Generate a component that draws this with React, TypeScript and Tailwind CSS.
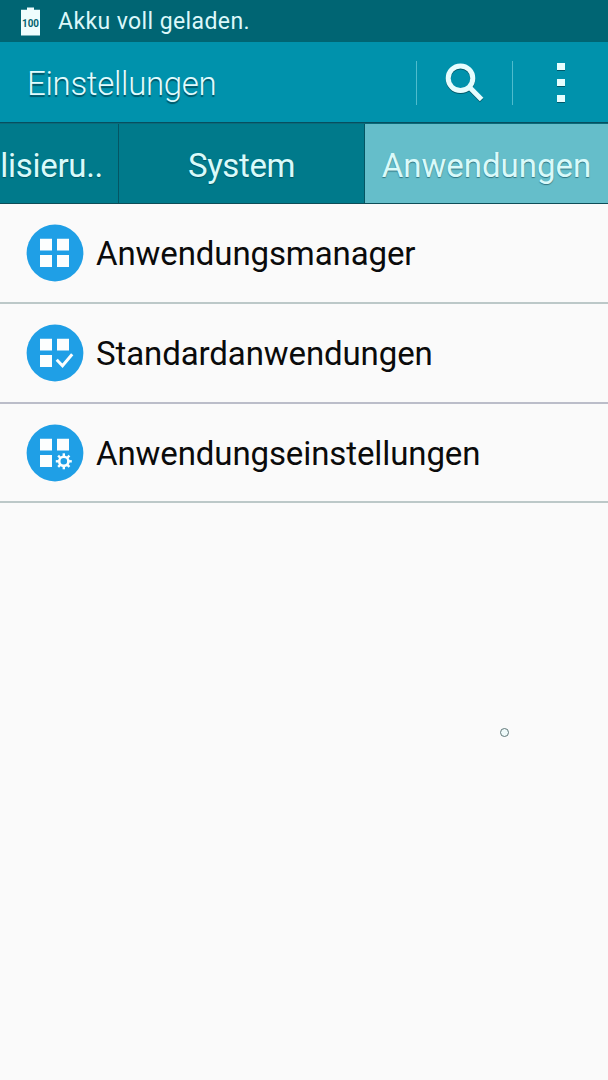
import type { ReactNode } from "react";

function BatteryIcon() {
  return (
    <svg width="19" height="29" viewBox="0 0 19 29" className="block">
      <path d="M6 0.5h7v2.3h6v25.7H0V2.8h6z" fill="#effdfd" />
      <text x="9.5" y="19.6" textAnchor="middle" textLength="17" lengthAdjust="spacingAndGlyphs" fontSize="11" fontWeight="700" fontFamily="Roboto, sans-serif" fill="#04636f">
        100
      </text>
    </svg>
  );
}

function SearchIcon() {
  return (
    <svg width="40" height="42" viewBox="0 0 40 42" className="block drop-shadow-[0_1px_0.5px_rgba(0,50,60,0.6)]">
      <circle cx="15.5" cy="16.2" r="12.3" fill="none" stroke="#e6fdfe" strokeWidth="5" />
      <path d="M24 24.8L36.6 37.6" stroke="#e6fdfe" strokeWidth="5" />
    </svg>
  );
}

function MoreIcon() {
  return (
    <div className="flex flex-col gap-[9px] drop-shadow-[0_1px_0.5px_rgba(0,50,60,0.6)]">
      <div className="h-[7px] w-2 bg-[#e6fdfe]" />
      <div className="h-[7px] w-2 bg-[#e6fdfe]" />
      <div className="h-[7px] w-2 bg-[#e6fdfe]" />
    </div>
  );
}

function AppsIcon({ children }: { children: ReactNode }) {
  return (
    <svg width="58" height="58" viewBox="0 0 58 58" className="block shrink-0">
      <circle cx="29" cy="29" r="28.4" fill="#1f9fe6" />
      <path d="M14 14.7h12v11.8H14zM31 14.7h12v11.8H31zM14 31h12v12H14z" fill="#fcfefe" />
      {children}
    </svg>
  );
}

const square = <path d="M31 31h12v12H31z" fill="#fcfefe" />;
const check = <path d="M30.7 35.8l5.8 5.9L46.2 30.3" fill="none" stroke="#fcfefe" strokeWidth="3" />;
const teeth = [0, 45, 90, 135, 180, 225, 270, 315];
const gear = (
  <g transform="translate(37.8 37.3)">
    <circle r="4.6" fill="none" stroke="#fcfefe" strokeWidth="2.6" />
    {teeth.map((a) => (
      <path key={a} d="M-1.2 -8h2.4v3h-2.4z" fill="#fcfefe" transform={`rotate(${a})`} />
    ))}
  </g>
);

function Row({ icon, label, line }: { icon: ReactNode; label: string; line: string }) {
  return (
    <div className={`flex items-center border-b-2 pl-[26px] text-[33px] tracking-[-0.1px] text-[#0b0b0b] ${line}`}>
      <AppsIcon>{icon}</AppsIcon>
      <span className="ml-[12px] whitespace-nowrap pt-[2px]">{label}</span>
    </div>
  );
}

export default function App() {
  return (
    <div className="flex h-[1080px] w-[608px] flex-col overflow-hidden bg-[#fafafa] font-['Roboto',sans-serif]">
      <div className="flex h-[42px] shrink-0 items-center bg-[#006573] pl-[21px]">
        <BatteryIcon />
        <span className="ml-[18px] pt-px text-[23px] leading-[42px] tracking-[0.4px] text-[#dcf8fa]">Akku voll geladen.</span>
      </div>

      <div className="flex h-[81px] shrink-0 items-center border-b border-[#064f60] bg-[#0092ac] pt-px">
        <h1 className="flex-1 pl-[27px] pt-[3px] text-[33px] font-light leading-[40px] tracking-[-0.3px] text-[#e2fbfd] [text-shadow:0_1.5px_1px_rgba(0,45,55,0.6)]">
          Einstellungen
        </h1>
        <div className="h-[44px] w-px bg-[#4fbccd]" />
        <div className="flex w-[95px] items-center justify-center">
          <SearchIcon />
        </div>
        <div className="h-[44px] w-px bg-[#4fbccd]" />
        <div className="flex w-[95px] items-center justify-center">
          <MoreIcon />
        </div>
      </div>

      <div className="flex h-[81px] shrink-0 border-b border-t border-b-[#0d4d57] border-t-[#0a6a79] text-[33px] leading-[84px] text-[#d9fafa] [text-shadow:0_1px_1px_rgba(0,45,55,0.5)]">
        <div className="flex w-[119px] shrink-0 justify-end overflow-hidden whitespace-nowrap border-r border-[#045563] bg-[#007a8b] pr-[15px] tracking-[-0.3px]">
          Personalisieru..
        </div>
        <div className="flex w-[246px] shrink-0 justify-center border-r border-[#045563] bg-[#007a8b] tracking-[-0.4px]">System</div>
        <div className="flex w-[243px] shrink-0 justify-center bg-[#65beca]">Anwendungen</div>
      </div>

      <div className="grid shrink-0 grid-rows-[100px_100px_99px]">
        <Row icon={square} label="Anwendungsmanager" line="border-[#bcc8c8]" />
        <Row icon={check} label="Standardanwendungen" line="border-[#bbbdc9]" />
        <Row icon={gear} label="Anwendungseinstellungen" line="border-[#bcc8c8]" />
      </div>

      <div className="pl-[500px] pt-[225px]">
        <div className="size-[9px] rounded-full border-[1.5px] border-[#617879] bg-[#effafa]" />
      </div>
    </div>
  );
}
